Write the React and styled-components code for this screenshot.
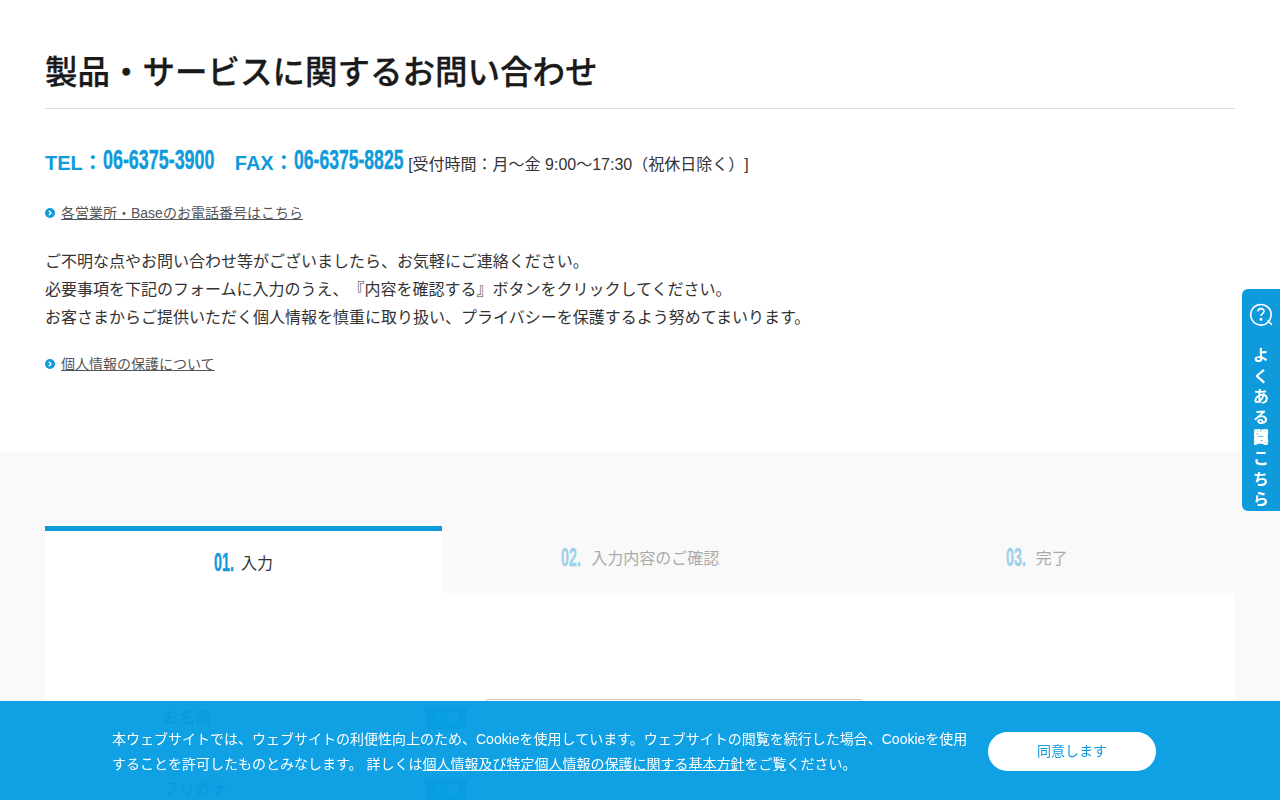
import React from 'react';
import styled, { createGlobalStyle } from 'styled-components';

const BLUE = '#0f9adb';
const FONT = '"Liberation Sans", "Noto Sans CJK JP", sans-serif';

const GlobalStyle = createGlobalStyle`
  html, body {
    margin: 0;
    padding: 0;
    background: #fff;
    color: #222;
    font-family: ${FONT};
    text-spacing-trim: space-all;
    overflow: hidden;
    height: 800px;
  }
  * { box-sizing: border-box; }
`;

const Intro = styled.section`
  height: 451px;
  padding: 44px 45px 0;
`;

const Title = styled.h1`
  margin: 0 0 36px;
  height: 65px;
  font-size: 32.5px;
  line-height: 58px;
  font-weight: 500;
  -webkit-text-stroke: .3px #1a1a1a;
  color: #1a1a1a;
  border-bottom: 1px solid #ddd;
`;

const Phones = styled.p`
  margin: 0 0 20px;
  font-size: 16px;
  line-height: 36px;
  color: #333;
`;

const PhoneLabel = styled.b`
  font-size: 20px;
  color: ${BLUE};
  margin-left: ${props => props.second ? '20px' : '0'};
`;

const PhoneNumber = styled.span`
  display: inline-block;
  width: ${props => props.wide}px;
  font-weight: 700;
  font-size: 27px;
  line-height: 30px;
  -webkit-text-stroke: .4px ${BLUE};
  color: ${BLUE};
  white-space: nowrap;
  transform-origin: left center;
  transform: translateY(-1px) scaleX(${props => props.wide / 169});
`;

const LinkRow = styled.div`
  display: flex;
  align-items: center;
  gap: 6px;
  font-size: 14px;
  line-height: 20px;
  color: #555;
  margin-bottom: ${props => props.last ? '0' : '25px'};
  a { color: inherit; text-decoration: underline; }
`;

const Lead = styled.p`
  margin: 0 0 22px;
  font-size: 16px;
  line-height: 28px;
  color: #333;
`;

const FormArea = styled.section`
  height: 349px;
  background: #f9f9f9;
  padding: 75px 45px 0;
  overflow: hidden;
`;

const Steps = styled.div`
  display: flex;
`;

const Step = styled.div`
  flex: ${props => props.active ? '0 0 397px' : '1'};
  height: 67px;
  display: flex;
  align-items: center;
  justify-content: center;
  gap: 7px;
  background: ${props => props.active ? '#fff' : 'transparent'};
  border-top: ${props => props.active ? `5px solid ${BLUE}` : '0'};
  padding-bottom: ${props => props.active ? '0' : '5px'};
  opacity: ${props => props.active ? 1 : 0.4};
  font-size: 16px;
  color: #333;
`;

const StepNumber = styled.span`
  display: inline-block;
  width: ${props => props.wide}px;
  font-weight: 700;
  font-size: 26px;
  -webkit-text-stroke: .4px ${BLUE};
  color: ${BLUE};
  white-space: nowrap;
  transform-origin: left center;
  transform: scaleX(.55);
`;

const Panel = styled.div`
  background: #fff;
  height: 260px;
  padding: 106px 118px 0;
`;

const FormRow = styled.div`
  display: flex;
  align-items: flex-start;
  height: 72px;
`;

const FieldLabel = styled.label`
  flex: 0 0 262px;
  font-size: 16px;
  font-weight: 700;
  line-height: 38px;
  color: #333;
`;

const Badge = styled.span`
  flex: 0 0 42px;
  height: 22px;
  margin: 8px 18px 0 0;
  background: #0a6fa8;
  color: #fff;
  font-size: 12px;
  line-height: 22px;
  text-align: center;
`;

const Input = styled.div`
  width: 378px;
  height: 38px;
  border: 1px solid #ccc;
  border-radius: 3px;
  background: #fff;
`;

const SideTab = styled.a`
  position: fixed;
  top: 289px;
  right: 0;
  width: 38px;
  height: 222px;
  background: ${BLUE};
  border-radius: 6px 0 0 6px;
  color: #fff;
  text-decoration: none;
  display: flex;
  flex-direction: column;
  align-items: center;
  padding-top: 13px;
`;

const SideText = styled.span`
  margin-top: 20px;
  display: flex;
  flex-direction: column;
  font-size: 16px;
  font-weight: 700;
`;

const SideChar = styled.span`
  display: grid;
  height: 20.6px;
  line-height: 20.6px;
  text-align: center;
  > i { grid-area: 1 / 1; font-style: normal; }
`;

const CookieBar = styled.div`
  position: fixed;
  left: 0;
  right: 0;
  bottom: 0;
  height: 99px;
  background: rgba(8, 158, 227, 0.97);
  display: flex;
  align-items: center;
  padding: 2px 124px 0 112px;
  gap: 19px;
  color: #fff;
`;

const CookieText = styled.p`
  margin: 0;
  flex: 1;
  font-size: 14px;
  line-height: 25px;
  a { color: #fff; text-decoration: underline; }
`;

const AgreeButton = styled.button`
  flex: 0 0 168px;
  height: 39px;
  border: 0;
  padding: 0 0 3px;
  border-radius: 20px;
  background: #fff;
  color: ${BLUE};
  font-family: ${FONT};
  font-size: 14px;
`;

const Bullet = () => (
  <svg width="10" height="10" viewBox="0 0 10 10">
    <circle cx="5" cy="5" r="5" fill={BLUE} />
    <path d="M3.8 2.8 6 5 3.8 7.2" fill="none" stroke="#fff" strokeWidth="1.4" />
  </svg>
);

const QuestionIcon = () => (
  <svg width="24" height="24" viewBox="0 0 24 24" fill="none" stroke="#fff" strokeWidth="1.6">
    <path d="M19.600 19.800A10.300 10.300 0 1 1 22.300 12c0 2.600-.9 5.200-2.700 7.800" />
    <path d="M19 19l3.500 3.300" strokeLinecap="round" />
    <path d="M9 9.600c0-1.800 1.300-3 3-3s3 1.100 3 2.700c0 2.400-3 2.400-3 4.800" />
    <circle cx="12" cy="17.300" r=".7" fill="#fff" />
  </svg>
);

export default function App() {
  return (
    <>
      <GlobalStyle />
      <Intro>
        <Title>製品・サービスに関するお問い合わせ</Title>
        <Phones>
          <PhoneLabel>TEL：</PhoneLabel><PhoneNumber wide={112}>06-6375-3900</PhoneNumber>
          <PhoneLabel second>FAX：</PhoneLabel><PhoneNumber wide={110}>06-6375-8825</PhoneNumber>
          {' '}[受付時間：月～金 9:00～17:30（祝休日除く）]
        </Phones>
        <LinkRow><Bullet /><a href="#tel">各営業所・Baseのお電話番号はこちら</a></LinkRow>
        <Lead>
          ご不明な点やお問い合わせ等がございましたら、お気軽にご連絡ください。<br />
          必要事項を下記のフォームに入力のうえ、『内容を確認する』ボタンをクリックしてください。<br />
          お客さまからご提供いただく個人情報を慎重に取り扱い、プライバシーを保護するよう努めてまいります。
        </Lead>
        <LinkRow last><Bullet /><a href="#privacy">個人情報の保護について</a></LinkRow>
      </Intro>
      <FormArea>
        <Steps>
          <Step active><StepNumber wide={20}>01.</StepNumber>入力</Step>
          <Step><StepNumber wide={23}>02.</StepNumber>入力内容のご確認</Step>
          <Step><StepNumber wide={23}>03.</StepNumber>完了</Step>
        </Steps>
        <Panel>
          <FormRow><FieldLabel>お名前</FieldLabel><Badge>必須</Badge><Input /></FormRow>
          <FormRow><FieldLabel>フリガナ</FieldLabel><Badge>必須</Badge><Input /></FormRow>
        </Panel>
      </FormArea>
      <SideTab href="#faq">
        <QuestionIcon />
        <SideText>
          <SideChar>よ</SideChar>
          <SideChar>く</SideChar>
          <SideChar>あ</SideChar>
          <SideChar>る</SideChar>
          <SideChar><i>質</i><i>問</i><i>は</i></SideChar>
          <SideChar>こ</SideChar>
          <SideChar>ち</SideChar>
          <SideChar>ら</SideChar>
        </SideText>
      </SideTab>
      <CookieBar>
        <CookieText>
          本ウェブサイトでは、ウェブサイトの利便性向上のため、Cookieを使用しています。ウェブサイトの閲覧を続行した場合、Cookieを使用することを許可したものとみなします。 詳しくは<a href="#policy">個人情報及び特定個人情報の保護に関する基本方針</a>をご覧ください。
        </CookieText>
        <AgreeButton>同意します</AgreeButton>
      </CookieBar>
    </>
  );
}
